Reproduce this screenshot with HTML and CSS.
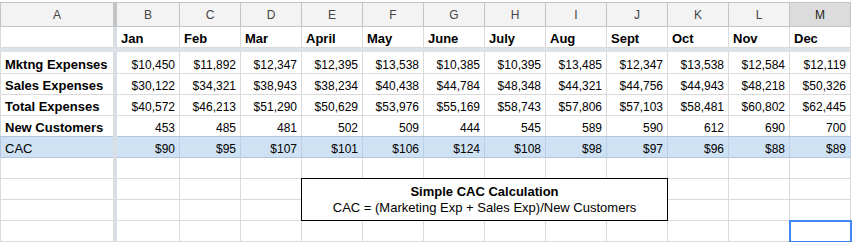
FILE: index.html
```html
<!DOCTYPE html>
<html lang="en">
<head>
  <meta charset="UTF-8">
  <title>CAC</title>
  <link rel="stylesheet" href="styles.css">
</head>
<body>

<div class="sheet">
  <!-- frozen lines -->
  <div class="vsep-head"></div>
  <div class="vsep"></div>
  <div class="hsep"></div>

  <!-- column header -->
  <div class="hd col-a">A</div>
  <div class="hd">B</div>
  <div class="hd">C</div>
  <div class="hd">D</div>
  <div class="hd">E</div>
  <div class="hd">F</div>
  <div class="hd">G</div>
  <div class="hd">H</div>
  <div class="hd">I</div>
  <div class="hd">J</div>
  <div class="hd">K</div>
  <div class="hd">L</div>
  <div class="hd sel">M</div>

  <!-- 1 -->
  <div class="cell col-a"></div>
  <div class="cell mon">Jan</div>
  <div class="cell mon">Feb</div>
  <div class="cell mon">Mar</div>
  <div class="cell mon">April</div>
  <div class="cell mon">May</div>
  <div class="cell mon">June</div>
  <div class="cell mon">July</div>
  <div class="cell mon">Aug</div>
  <div class="cell mon">Sept</div>
  <div class="cell mon">Oct</div>
  <div class="cell mon">Nov</div>
  <div class="cell mon">Dec</div>

  <!-- 2 -->
  <div class="cell col-a lbl">Mktng Expenses</div>
  <div class="cell">$10,450</div>
  <div class="cell">$11,892</div>
  <div class="cell">$12,347</div>
  <div class="cell">$12,395</div>
  <div class="cell">$13,538</div>
  <div class="cell">$10,385</div>
  <div class="cell">$10,395</div>
  <div class="cell">$13,485</div>
  <div class="cell">$12,347</div>
  <div class="cell">$13,538</div>
  <div class="cell">$12,584</div>
  <div class="cell">$12,119</div>

  <!-- 3 -->
  <div class="cell col-a lbl">Sales Expenses</div>
  <div class="cell">$30,122</div>
  <div class="cell">$34,321</div>
  <div class="cell">$38,943</div>
  <div class="cell">$38,234</div>
  <div class="cell">$40,438</div>
  <div class="cell">$44,784</div>
  <div class="cell">$48,348</div>
  <div class="cell">$44,321</div>
  <div class="cell">$44,756</div>
  <div class="cell">$44,943</div>
  <div class="cell">$48,218</div>
  <div class="cell">$50,326</div>

  <!-- 4 -->
  <div class="cell col-a lbl">Total Expenses</div>
  <div class="cell">$40,572</div>
  <div class="cell">$46,213</div>
  <div class="cell">$51,290</div>
  <div class="cell">$50,629</div>
  <div class="cell">$53,976</div>
  <div class="cell">$55,169</div>
  <div class="cell">$58,743</div>
  <div class="cell">$57,806</div>
  <div class="cell">$57,103</div>
  <div class="cell">$58,481</div>
  <div class="cell">$60,802</div>
  <div class="cell">$62,445</div>

  <!-- 5 -->
  <div class="cell col-a lbl">New Customers</div>
  <div class="cell">453</div>
  <div class="cell">485</div>
  <div class="cell">481</div>
  <div class="cell">502</div>
  <div class="cell">509</div>
  <div class="cell">444</div>
  <div class="cell">545</div>
  <div class="cell">589</div>
  <div class="cell">590</div>
  <div class="cell">612</div>
  <div class="cell">690</div>
  <div class="cell">700</div>

  <!-- 6 -->
  <div class="cell col-a txt cac">CAC</div>
  <div class="cell cac">$90</div>
  <div class="cell cac">$95</div>
  <div class="cell cac">$107</div>
  <div class="cell cac">$101</div>
  <div class="cell cac">$106</div>
  <div class="cell cac">$124</div>
  <div class="cell cac">$108</div>
  <div class="cell cac">$98</div>
  <div class="cell cac">$97</div>
  <div class="cell cac">$96</div>
  <div class="cell cac">$88</div>
  <div class="cell cac">$89</div>

  <!-- 7 -->
  <div class="cell col-a"></div>
  <div class="cell"></div><div class="cell"></div><div class="cell"></div>
  <div class="cell"></div><div class="cell"></div><div class="cell"></div>
  <div class="cell"></div><div class="cell"></div><div class="cell"></div>
  <div class="cell"></div><div class="cell"></div><div class="cell"></div>

  <!-- 8 : E-J sit under the note -->
  <div class="cell col-a"></div>
  <div class="cell"></div><div class="cell"></div><div class="cell"></div>
  <div class="cell"></div><div class="cell"></div><div class="cell"></div>

  <!-- 9 -->
  <div class="cell col-a"></div>
  <div class="cell"></div><div class="cell"></div><div class="cell"></div>
  <div class="cell"></div><div class="cell"></div><div class="cell"></div>

  <!-- 10 -->
  <div class="cell col-a"></div>
  <div class="cell"></div><div class="cell"></div><div class="cell"></div>
  <div class="cell"></div><div class="cell"></div><div class="cell"></div>
  <div class="cell"></div><div class="cell"></div><div class="cell"></div>
  <div class="cell"></div><div class="cell"></div><div class="cell cur"></div>

  <div class="note">
    <b>Simple CAC Calculation</b>
    <span>CAC = (Marketing Exp + Sales Exp)/New Customers</span>
  </div>
</div>

</body>
</html>
```

FILE: styles.css
```css
* {
  margin: 0;
  padding: 0;
  box-sizing: border-box;
}

body {
  background-color: #fff;
  font-family: "Liberation Sans", Arial, sans-serif;
  color: #000;
}

.sheet {
  display: grid;
  grid-template-columns: 113px 4px 63px repeat(11, 61px);
  grid-template-rows: 25px 21px 4px 22px repeat(8, 21px);
  margin-top: 2px;
}

/* frozen row / column lines */
.vsep-head {
  grid-column: 2;
  grid-row: 1;
  background-color: #c4c4c4;
}

.vsep {
  grid-column: 2;
  grid-row: 2 / -1;
  background-color: #d9dde4;
}

.hsep {
  grid-column: 1 / -1;
  grid-row: 3;
  background-color: #dde1e8;
}

.hd {
  display: flex;
  align-items: center;
  justify-content: center;
  background-color: #f3f3f3;
  border-top: 1px solid #c4c4c4;
  border-right: 1px solid #c4c4c4;
  border-bottom: 1px solid #c4c4c4;
  font-size: 12px;
  color: #444;
}

.hd.sel {
  background-color: #dcdcdc;
  color: #222;
}

.cell {
  display: flex;
  align-items: flex-end;
  justify-content: flex-end;
  padding: 0 4px;
  border-right: 1px solid #dadada;
  border-bottom: 1px solid #dadada;
  font-size: 12px;
  line-height: 16px;
  white-space: nowrap;
}

.col-a {
  border-left: 1px solid #dadada;
  border-right: none;
}

.hd.col-a {
  border-left-color: #c4c4c4;
}

.mon,
.lbl {
  justify-content: flex-start;
  font-size: 13px;
  font-weight: bold;
}

.txt {
  justify-content: flex-start;
  font-size: 13px;
}

.cac {
  background-color: #cfe2f3;
  border-right-color: #bccfe4;
  border-bottom-color: #b3c6dc;
  box-shadow: 0 -1px 0 #b3c6dc;
}

.col-a.cac {
  border-left-color: #b3c6dc;
}

/* selected cell M10 */
.cur {
  outline: 2px solid #4285f4;
  outline-offset: -1px;
}

.note {
  grid-column: 6 / 12;
  grid-row: 10 / 12;
  margin: -1px 0 0 -1px;
  display: flex;
  flex-direction: column;
  align-items: center;
  justify-content: center;
  border: 1px solid #000;
  background-color: #fff;
  font-size: 13px;
  line-height: 16px;
}
```
